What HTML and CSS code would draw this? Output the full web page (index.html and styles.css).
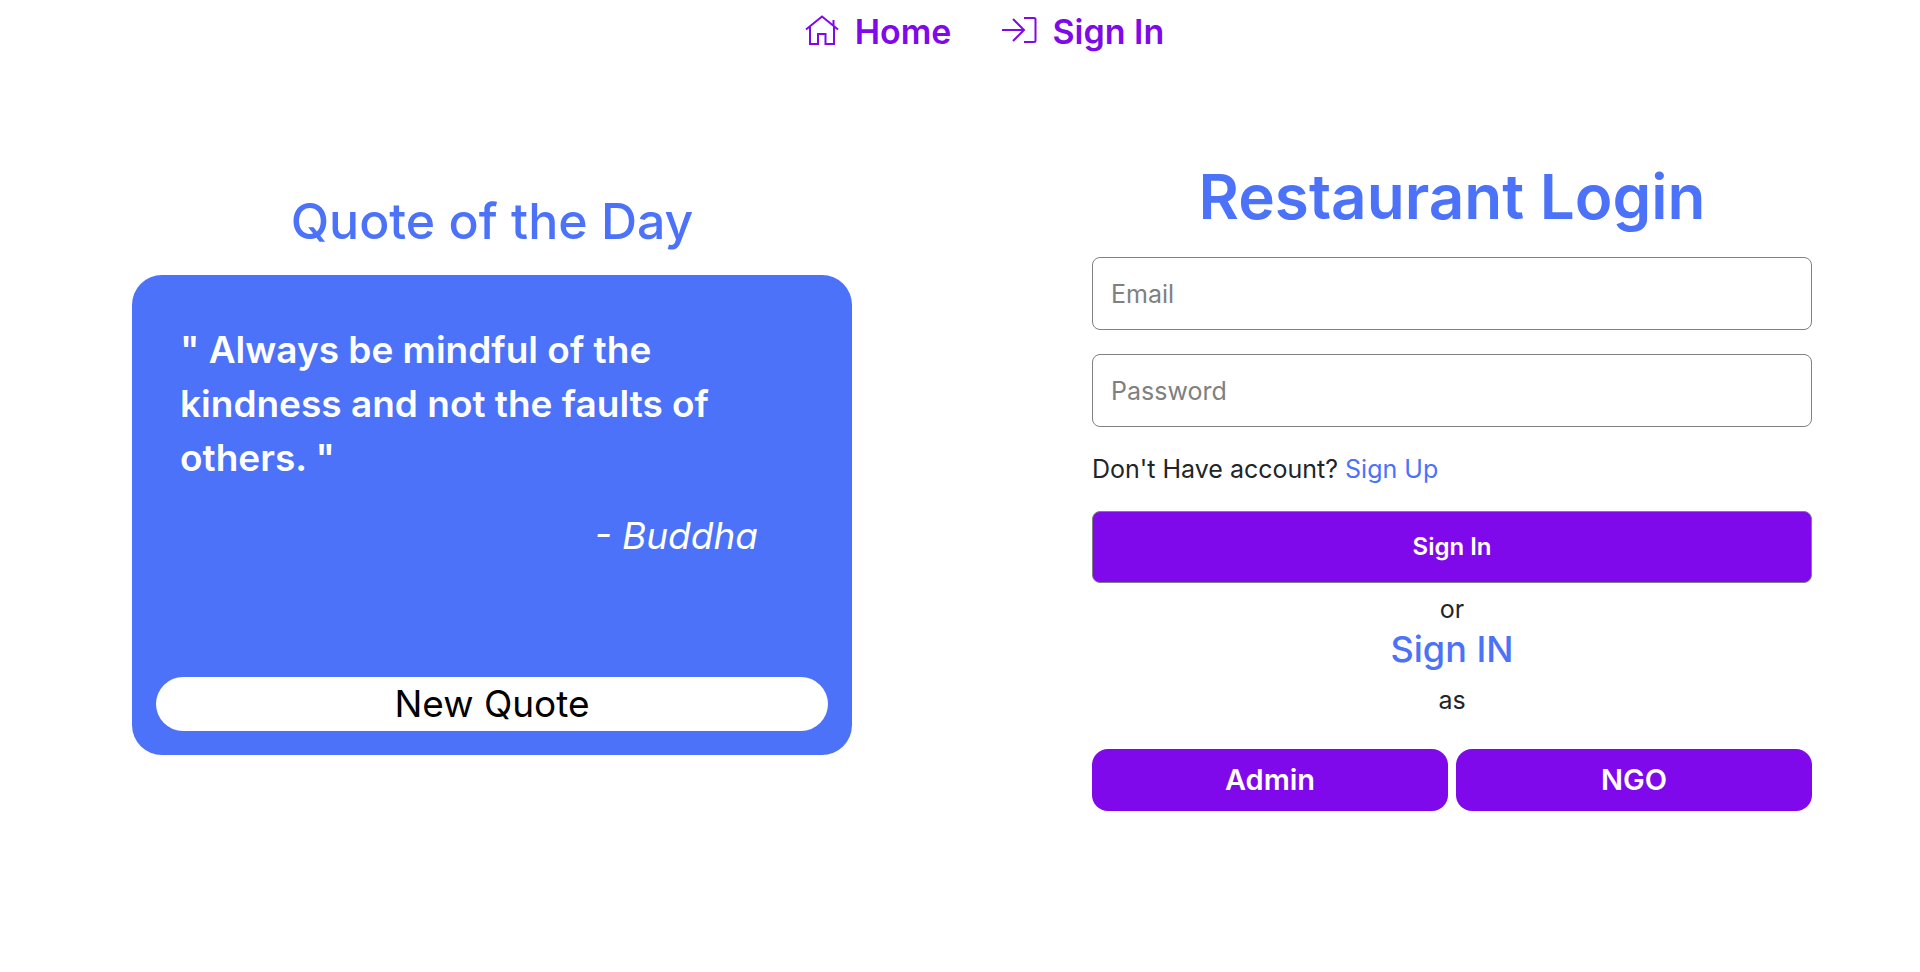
FILE: index.html
```html
<!DOCTYPE html>
<html lang="en">
<head>
<meta charset="utf-8">
<meta name="viewport" content="width=device-width, initial-scale=1">
<title>Restaurant Login</title>
<link rel="stylesheet" href="styles.css">
</head>
<body>
<nav class="nav">
  <a class="nav-link" href="#home">
    <svg class="nav-icon" viewBox="0 0 36 36" aria-hidden="true"><path d="M2 15.500 18 2.500 34 15.500M6 12.500V30H14V20H21.500V30H30V12.500M29.500 6V12"/></svg>
    Home
  </a>
  <a class="nav-link" href="#signin">
    <svg class="nav-icon" viewBox="0 0 36 36" aria-hidden="true"><path d="M1 16H23M12 5 23 16 12 27M23 4H33Q34.500 4 34.500 5.500V26.500Q34.500 28 33 28H23"/></svg>
    Sign In
  </a>
</nav>
<main class="page">
  <section class="column quote">
    <h2 class="quote-title">Quote of the Day</h2>
    <div class="card">
      <blockquote class="quote-text">" Always be mindful of the kindness and not the faults of others. "</blockquote>
      <p class="author">- Buddha</p>
      <button class="new-quote" type="button">New Quote</button>
    </div>
  </section>
  <section class="column login">
    <h1 class="login-title">Restaurant Login</h1>
    <form class="form">
      <input class="field" type="email" placeholder="Email" aria-label="Email">
      <input class="field" type="password" placeholder="Password" aria-label="Password">
      <p class="signup">Don't Have account? <a class="signup-link" href="#signup">Sign Up</a></p>
      <button class="submit" type="button">Sign In</button>
    </form>
    <p class="small">or</p>
    <h3 class="alt-title">Sign IN</h3>
    <p class="small">as</p>
    <div class="roles">
      <button class="role" type="button">Admin</button>
      <button class="role" type="button">NGO</button>
    </div>
  </section>
</main>
</body>
</html>
```
FILE: styles.css
```css
* {
  box-sizing: border-box;
  margin: 0;
}

body {
  font-family: Inter, "Open Sans", sans-serif;
  font-size: 25px;
  line-height: 36px;
  color: #212529;
  background: #fff;
}

button,
input {
  font: inherit;
}

button {
  border: 0;
  cursor: pointer;
}

.nav {
  display: flex;
  justify-content: center;
  gap: 50px;
  padding: 5px 0;
  margin-left: 48px;
}

.nav-link {
  display: flex;
  align-items: center;
  gap: 15px;
  font-size: 34px;
  font-weight: 600;
  line-height: 54px;
  color: #7f09ea;
  text-decoration: none;
}

.nav-icon {
  width: 36px;
  height: 36px;
  fill: none;
  stroke: currentColor;
  stroke-width: 2;
}

.page {
  display: grid;
  grid-template-columns: 1fr 1fr;
}

.column {
  width: 75%;
}

.quote {
  margin-left: 132px;
  padding-top: 120px;
}

.quote-title {
  margin-bottom: 16px;
  font-size: 50px;
  font-weight: 500;
  line-height: 75px;
  text-align: center;
  color: #4b72f8;
}

.card {
  display: flex;
  flex-direction: column;
  min-height: 480px;
  padding: 48px 24px 24px;
  border-radius: 30px;
  background: #4b72f8;
  color: #fff;
  font-size: 37px;
  line-height: 54px;
}

.quote-text {
  padding: 0 80px 0 24px;
  font-weight: 600;
}

.author {
  padding: 24px 70px 0;
  font-style: italic;
  text-align: right;
}

.new-quote {
  margin-top: auto;
  padding: 0;
  border-radius: 27px;
  background: #fff;
  color: #000;
}

.login {
  margin-left: 132px;
  padding-top: 88px;
}

.login-title {
  margin-bottom: 15px;
  font-size: 62px;
  font-weight: 600;
  line-height: 90px;
  text-align: center;
  color: #4b72f8;
}

.form {
  display: flex;
  flex-direction: column;
  gap: 24px;
  margin-bottom: 8px;
}

.field,
.submit {
  width: 100%;
  padding: 17px 18px;
  border: 1px solid #808080;
  border-radius: 8px;
}

.field {
  min-height: 73px;
}

.field::placeholder {
  color: #808080;
  opacity: 1;
}

.signup-link {
  color: #4b72f8;
  text-decoration: none;
}

.submit {
  background: #7f09ea;
  color: #fff;
  font-size: 24px;
  font-weight: 600;
}

.small {
  text-align: center;
}

.alt-title {
  margin-bottom: 11px;
  font-size: 36px;
  font-weight: 500;
  line-height: 44px;
  text-align: center;
  color: #4b72f8;
}

.roles {
  display: grid;
  grid-template-columns: 1fr 1fr;
  gap: 8px;
  margin-top: 31px;
}

.role {
  padding: 9px;
  border-radius: 16px;
  background: #7f09ea;
  color: #fff;
  font-size: 29px;
  font-weight: 600;
  line-height: 44px;
}
```
